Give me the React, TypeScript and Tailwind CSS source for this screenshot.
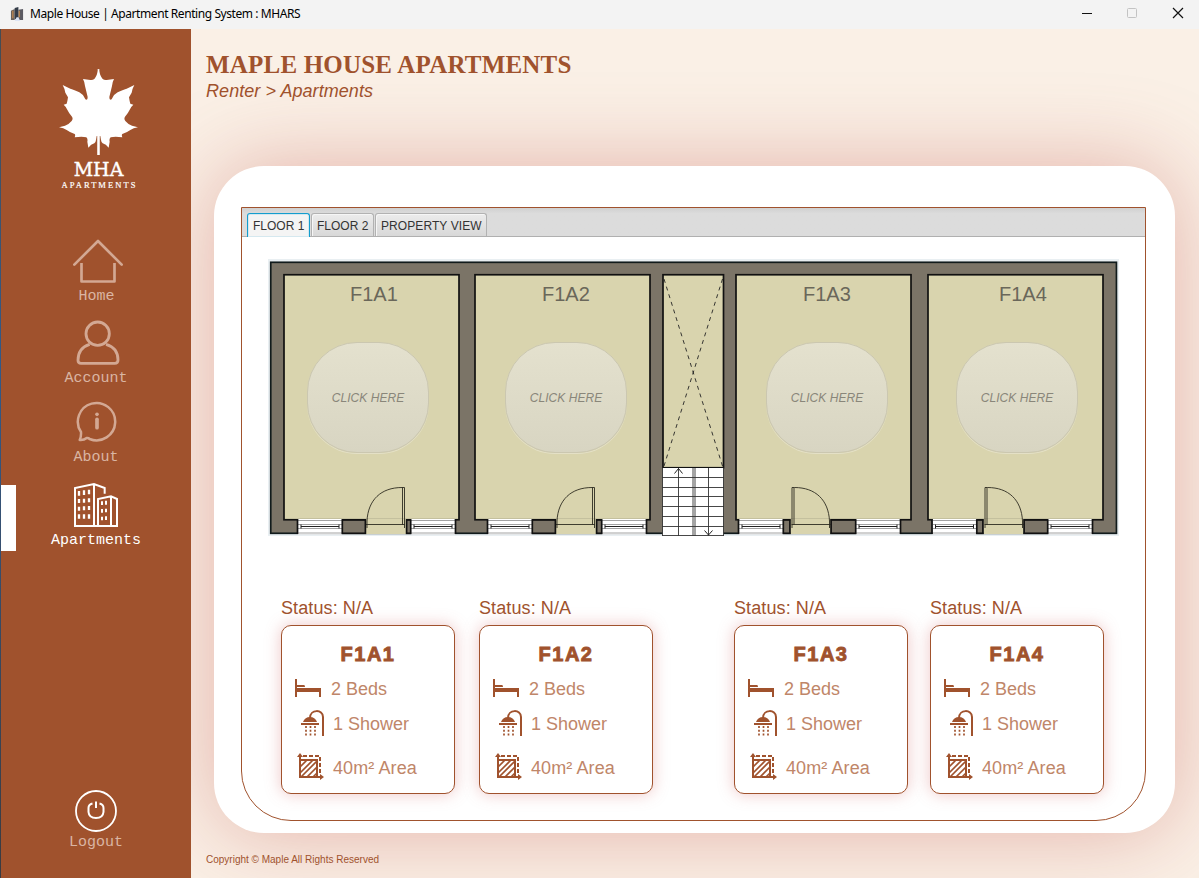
import React from "react";

const SANS = "font-['Liberation_Sans',sans-serif]";

function MapleLeaf() {
  const half =
    "M295 206 L295.5 206 Q300 228 308 237 Q313 241 320 240 L342 237 Q337 246 336 258 L328 291 Q328 299 331 299 Q336 299 337 294 Q342 283 353 277 Q372 268 380 266 L403 255 Q396 268 395 278 L387 292 Q389 306 391 311 L400 314 Q393 320 390 328 Q386 337 375 350 Q371 356 376 363 Q383 372 396 377 L414 382 Q400 384 391 390 Q380 398 367 402 Q364 405 367 412 Q345 408 332 412 Q327 416 329 425 L326 443 Q318 432 308 430 Q304 428 303 420 L301 408 L299 408 L299 465 L293 465 L293 206 Z";
  return (
    <svg className="h-[86px] w-[79px]" viewBox="177 207 237 258" fill="white">
      <path d={half} />
      <path d={half} transform="translate(591 0) scale(-1 1)" />
    </svg>
  );
}

function HomeIcon() {
  return (
    <svg className="h-[44px] w-[52px]" viewBox="216 42 156 132" fill="none" stroke="#d3a893" strokeWidth="8">
      <path d="M223 119 L294 48 L365 119" strokeLinecap="round" strokeLinejoin="round" />
      <path d="M244.500 114 V169.500 H343.500 V114" strokeLinejoin="round" />
    </svg>
  );
}

function AccountIcon() {
  return (
    <svg className="h-[45px] w-[44px]" viewBox="226 286 132 135" fill="none" stroke="#d3a893" strokeWidth="8.500">
      <circle cx="291" cy="327" r="35" />
      <path d="M267 359 C247 365 232 381 232 407 Q232 416 241 416 H342 Q352 416 352 406 C352 381 337 365 316 359" />
    </svg>
  );
}

function AboutIcon() {
  return (
    <svg className="h-[42px] w-[42px]" viewBox="225 528 126 126" fill="none" stroke="#d3a893" strokeWidth="7.500">
      <path
        d="M240 621 A56 56 0 1 1 266 642 Q262 638 257 639 Q249 646 236 645 Q241 636 240 621 Z"
        strokeLinejoin="round"
      />
      <path d="M288 583 V608" strokeWidth="11" strokeLinecap="round" />
      <circle cx="288" cy="568" r="5.500" fill="#d3a893" stroke="none" />
    </svg>
  );
}

function ApartmentsIcon() {
  return (
    <svg className="h-[46px] w-[46px]" viewBox="219 771 138 138" fill="none" stroke="white" strokeWidth="6">
      <path d="M225 903 V789 L282 777 L314 789 V806 M282 777 V903 M222 903 H354" />
      <path d="M294 903 V822 L333 814 L351 822 V903 M333 816 V903" />
      <path
        d="M237 798v14M252 796v14M267 794v14M237 822v12M252 821v12M267 820v12M237 845v12M252 844v12M267 843v12M237 868v13M252 868v13M267 868v13"
        strokeWidth="7"
      />
      <path d="M306 829v11M318 827v12M306 852v11M318 851v11M306 875v11M318 874v11" />
    </svg>
  );
}

function LogoutIcon() {
  return (
    <svg className="h-[42px] w-[42px]" viewBox="0 0 42 42" fill="none" stroke="white" strokeWidth="1.800">
      <circle cx="21" cy="21" r="20" />
      <path d="M17.500 13.500 Q13.500 14.500 13.500 18 V22 Q14 28 21 28 Q28 28 28.500 22 V18 Q28.500 14.500 24.500 13.500 M21 11.500 V18" strokeWidth="2" />
    </svg>
  );
}

function BedIcon() {
  return (
    <svg className="h-[18px] w-[26px]" viewBox="0 0 26 18" fill="#a0522d">
      <path d="M0 0H2V6H9Q10 6 10 8H2V9H26V18H24V13H2V18H0Z" />
    </svg>
  );
}

function ShowerIcon() {
  return (
    <svg className="h-[26px] w-[23px]" viewBox="0 0 23 26" fill="none" stroke="#a0522d" strokeWidth="2">
      <path d="M9 8 C9 -1 22 -1 22 7 V26" />
      <path d="M0 14H18" />
      <path d="M2 12 Q4 7 9 7 Q14 7 16 12Z" fill="#a0522d" stroke="none" />
      <path d="M5 16V25.500M9.500 16V25.500M14 16V25.500" strokeWidth="1.700" strokeDasharray="2 1.700" />
    </svg>
  );
}

function AreaIcon() {
  return (
    <svg className="h-[27px] w-[27px]" viewBox="0 0 27 27" fill="none" stroke="#a0522d" strokeWidth="2">
      <rect x="3" y="7" width="17" height="17" />
      <path d="M3 14L10 7M3 20L16 7M4 24L20 8M10 24L20 14M16 24L20 20" strokeWidth="1.700" />
      <path d="M6 3H23V20" strokeDasharray="4 2" />
      <path d="M3 7V2M20 24H25" />
      <path d="M0 4L3 0L6 4ZM23 21L27 24L23 27Z" fill="#a0522d" stroke="none" />
    </svg>
  );
}

function NavItem({ label, children, active }: { label: string; children: React.ReactNode; active?: boolean }) {
  return (
    <div className="relative flex w-full flex-col items-center">
      {active && <div className="absolute top-[3px] left-0 h-[66px] w-[15px] bg-white" />}
      {children}
      <div
        className={
          "h-[16px] pt-px font-['Liberation_Mono',monospace] text-[15px] leading-[16px] " +
          (active ? "text-white" : "text-[#dab5a3]")
        }
      >
        {label}
      </div>
    </div>
  );
}

function Sidebar() {
  return (
    <aside className="flex h-full w-[190px] shrink-0 flex-col items-center bg-[#a0522d] pt-[40px] pb-[28px] text-white">
      <div className="flex flex-col items-center pl-[5px]">
        <MapleLeaf />
        <div className="mt-[4px] font-['DejaVu_Serif',serif] text-[19px] leading-[20px] [-webkit-text-stroke:0.4px_white]">
          MHA
        </div>
        <div className="mt-px -mr-[2px] pt-px font-['Liberation_Serif',serif] text-[8.5px] leading-[9px] tracking-[2.05px] [-webkit-text-stroke:0.2px_white]">
          APARTMENTS
        </div>
      </div>
      <div className="mt-[49px] w-full pl-px">
        <NavItem label="Home"><div className="mb-[5px] ml-[3px] h-[44px]"><HomeIcon /></div></NavItem>
      </div>
      <div className="mt-[16px] w-full">
        <NavItem label="Account"><div className="mb-[5px] ml-[3px] h-[45px]"><AccountIcon /></div></NavItem>
      </div>
      <div className="mt-[15px] w-full">
        <NavItem label="About"><div className="mb-[6px] ml-px h-[42px]"><AboutIcon /></div></NavItem>
      </div>
      <div className="mt-[17px] w-full">
        <NavItem label="Apartments" active><div className="mb-[4px] h-[46px]"><ApartmentsIcon /></div></NavItem>
      </div>
      <div className="mt-auto w-full">
        <NavItem label="Logout"><div className="mb-[2px] h-[42px]"><LogoutIcon /></div></NavItem>
      </div>
    </aside>
  );
}

const rooms = [
  { name: "F1A1", x: 284, w: 175, windows: [298, 411], door: 366, flip: false, label: 350, button: 307 },
  { name: "F1A2", x: 475, w: 175, windows: [488, 602], door: 556, flip: false, label: 542, button: 505 },
  { name: "F1A3", x: 736, w: 175, windows: [739, 856], door: 790.5, flip: true, label: 803, button: 766 },
  { name: "F1A4", x: 928, w: 175, windows: [932.5, 1048], door: 983.5, flip: true, label: 999, button: 956 },
];

function Opening({ x }: { x: number }) {
  return (
    <g>
      <rect x={x} y="519" width="44" height="15.500" fill="white" stroke="none" />
      <path d={`M${x} 520.500h44M${x} 524.500h44M${x} 528.500h44M${x} 533h44`} stroke="#8a8a8a" strokeWidth="0.800" />
      <path d={`M${x + 3} 526.500h38M${x + 3} 524.500v4M${x + 41} 524.500v4`} stroke="#222" strokeWidth="1" />
    </g>
  );
}

function WallEnd({ x, width }: { x: number; width: number }) {
  return <rect x={x} y="520" width={width} height="13.300" fill="#7b7467" stroke="#111" strokeWidth="1.700" />;
}

function Door({ x, flip }: { x: number; flip: boolean }) {
  return (
    <g transform={flip ? `translate(${2 * x + 40} 0) scale(-1 1)` : undefined}>
      <rect x={x} y="519" width="40" height="15" fill="#d9d4ae" />
      <path
        d={`M${x + 1} 528V521 C${x + 2} 500 ${x + 15} 487.500 ${x + 36} 487.500H${x + 38.5}V528M${x + 36.5} 487.500V525M${x} 524.500H${x + 39}`}
        fill="none"
        stroke="#2e2b20"
        strokeWidth="0.900"
      />
    </g>
  );
}

function FloorPlan() {
  return (
    <div className="relative mt-[22px] ml-[26px] h-[277px] w-[851px]">
      <svg className="block h-[277px] w-[851px]" viewBox="268 259 851 277">
        <rect x="268" y="259" width="851" height="277" fill="#e9eff2" />
        <rect x="270.750" y="262.300" width="845.700" height="271" fill="#7b7467" stroke="#111b1c" strokeWidth="1.700" />
        {rooms.map((r) => {
          const first = r.windows[0] + 44;
          const doorEnd = r.door + 40;
          return (
            <g key={r.name}>
              <rect x={r.x} y="274.750" width={r.w} height="245" fill="#d9d4ae" stroke="#111" strokeWidth="1.700" />
              {r.windows.map((x) => (
                <g key={x}>
                  <Opening x={x} />
                </g>
              ))}
              <Door x={r.door} flip={r.flip} />
              <WallEnd x={first + 0.3} width={r.door - first - 0.9} />
              <WallEnd x={doorEnd + 0.6} width={r.windows[1] - doorEnd - 0.9} />
              <path
                d={`M${r.windows[0] - 0.5} 519v15M${r.windows[1] + 44.5} 519v15`}
                stroke="#111"
                strokeWidth="1.700"
              />
              <text x={r.label} y="301" fontSize="20" fill="#6a675a" fontFamily="Liberation Sans, sans-serif">
                {r.name}
              </text>
            </g>
          );
        })}
        <rect x="663" y="274.750" width="60.500" height="193" fill="#d9d4ae" stroke="#111" strokeWidth="1.700" />
        <path d="M664 279L722.500 466M722.500 279L664 466" stroke="#222" strokeWidth="0.900" strokeDasharray="4 4" />
        <rect x="662.500" y="468" width="61" height="68" fill="white" />
        <path
          d="M662 477.500h62M662 487.500h62M662 496.500h62M662 506.500h62M662 516.500h62M662 526.500h62M662 535.500h62M678.500 468v68M693 468v68M695 468v68M708.500 468v68M662.500 468v68M723.500 468v68"
          stroke="#333"
          strokeWidth="0.900"
        />
        <path d="M674.500 473.500L678.500 468.500L682.500 473.500M704.500 530.500L708.500 535L712.500 530.500" fill="none" stroke="#222" />
      </svg>
      {rooms.map((r) => (
        <button
          key={r.name}
          style={{ left: r.button - 268 }}
          className="absolute top-[83px] h-[111px] w-[122px] rounded-[50px] border border-[#cbc7b0] bg-linear-to-b from-[#e4e1ce] to-[#d8d5c2] text-[12px] tracking-[0.05px] text-[#89867a] italic shadow-[0_1px_0_#e4e0c6]"
        >
          CLICK HERE
        </button>
      ))}
    </div>
  );
}

function UnitCard({ name }: { name: string }) {
  return (
    <div className="w-[174px] text-[#a0522d]">
      <div className="text-[18px] leading-[20px] tracking-[0.1px]">Status: N/A</div>
      <div className="mt-[7px] h-[169px] rounded-[10px] border border-[#a0522d] bg-white shadow-[0_0_16px_rgba(205,92,92,0.35)]">
        <div className="mt-[18px] text-center text-[20px] leading-[20px] font-bold tracking-[1.5px] [-webkit-text-stroke:0.9px_#a0522d]">
          {name}
        </div>
        <div className="mt-[15px] flex h-[18px] items-center gap-[10px] pl-[13px]">
          <BedIcon />
          <span className="pt-[2px] text-[18px] leading-[18px] text-[#bf8669]">2 Beds</span>
        </div>
        <div className="mt-[13px] flex h-[26px] items-center gap-[9px] pl-[19px]">
          <ShowerIcon />
          <span className="pt-[2px] text-[18px] leading-[18px] text-[#bf8669]">1 Shower</span>
        </div>
        <div className="mt-[17px] flex h-[27px] items-center gap-[9px] pl-[15px]">
          <AreaIcon />
          <span className="pt-[2px] text-[18px] leading-[18px] tracking-[0.1px] text-[#bf8669]">40m² Area</span>
        </div>
      </div>
    </div>
  );
}

function TabBar() {
  const idle =
    "h-[23px] rounded-t-[3px] border border-b-0 border-[#b2b2b2] bg-linear-to-b from-[#ececec] to-[#d8d8d8] px-[5px] pt-px leading-[22px] shadow-[inset_1px_1px_0_#f6f6f6]";
  return (
    <div className="flex h-[29px] items-end gap-px border-b border-[#b0b0b0] bg-linear-to-b from-[#d0d0d0] via-[#dcdcdc] via-20% to-[#dcdcdc] pl-[5px] text-[12px] text-[#333]">
      <div className="-mb-px h-[24px] w-[63px] rounded-t-[3px] border border-b-0 border-[#149dce] bg-[#f4f4f4] pt-px pl-[5px] leading-[22px] whitespace-nowrap shadow-[inset_0_0_0_1px_#d5e8ef]">
        FLOOR 1
      </div>
      <div className={idle + " w-[63px] whitespace-nowrap"}>FLOOR 2</div>
      <div className={idle + " w-[112px] tracking-[0.08px] whitespace-nowrap"}>PROPERTY VIEW</div>
    </div>
  );
}

export default function App() {
  return (
    <div className={"flex h-[878px] w-[1199px] flex-col overflow-hidden bg-[#faf0e6] " + SANS}>
      <header className="flex h-[29px] shrink-0 items-center bg-[#f3f3f3] pl-[10px] text-[12px] text-black">
        <svg className="mb-px h-[15px] w-[14px]" viewBox="0 0 15 16">
          <path d="M1 4L5 2V14H1Z" fill="#68605b" />
          <path d="M5 1L9 0V13H5Z" fill="#343c49" />
          <path d="M9 3L14 2V14H9Z" fill="#5b5a62" />
          <path d="M3 4V12M10 4V11" stroke="#b58352" strokeWidth="1.500" />
          <path d="M5 15L7 11H9L11 15Z" fill="#dce4f4" />
        </svg>
        <div className="mb-[2px] ml-[6px] grow font-['Noto_Sans',sans-serif] tracking-[-0.42px]">
          Maple House | Apartment Renting System : MHARS
        </div>
        <svg className="mr-[14px] mb-[3px] h-[12px] w-[103px]" viewBox="0 0 103 12" fill="none">
          <path d="M0 6.500H10" stroke="#111" />
          <rect x="45.500" y="1.500" width="9" height="9" rx="1" stroke="#c3c3c3" />
          <path d="M91 1L101 11M101 1L91 11" stroke="#111" strokeWidth="1.200" />
        </svg>
      </header>
      <div className="flex min-h-0 grow">
        <div className="w-px shrink-0 bg-linear-to-b from-[#454c52] via-[#315989] via-40% to-[#3a3b40]" />
        <Sidebar />
        <main className="flex grow flex-col overflow-hidden text-[#a0522d]">
          <div className="h-[137px] shrink-0 pt-[22px] pl-[15px]">
            <h1 className="font-['Liberation_Serif',serif] text-[25px] leading-[28px] font-bold tracking-[0.2px]">
              MAPLE HOUSE APARTMENTS
            </h1>
            <p className="mt-[2px] text-[18px] leading-[20px] tracking-[0.06px] italic">Renter &gt; Apartments</p>
          </div>
          <section className="ml-[23px] h-[667px] w-[961px] shrink-0 rounded-[50px] bg-white px-[27px] pt-[41px] shadow-[0_0_85px_rgba(195,85,78,0.4)]">
            <div className="h-[614px] w-[905px] rounded-b-[50px] border border-[#a0522d]">
              <TabBar />
              <FloorPlan />
              <div className="mt-[62px] flex pl-[39px]">
                <UnitCard name="F1A1" />
                <div className="ml-[24px]"><UnitCard name="F1A2" /></div>
                <div className="ml-[81px]"><UnitCard name="F1A3" /></div>
                <div className="ml-[22px]"><UnitCard name="F1A4" /></div>
              </div>
            </div>
          </section>
          <footer className="relative mt-[20px] pl-[15px] text-[10px] leading-[14px]">Copyright © Maple All Rights Reserved</footer>
        </main>
      </div>
    </div>
  );
}
